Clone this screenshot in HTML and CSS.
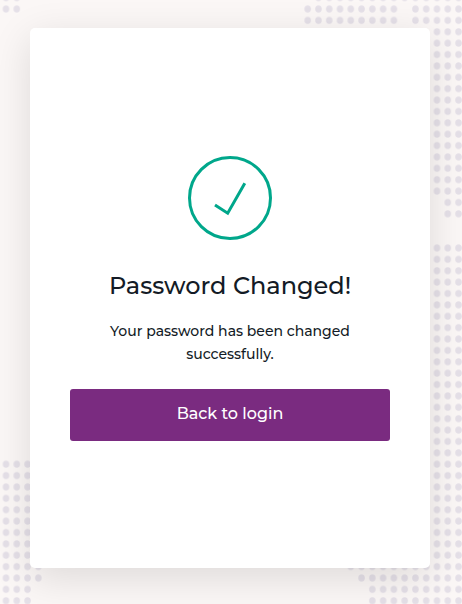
FILE: index.html
```html
<!DOCTYPE html>
<html lang="en">
<head>
    <meta charset="UTF-8">
    <meta name="viewport" content="width=device-width, initial-scale=1.0">
    <title>Password Changed</title>
    <link rel="stylesheet" href="styles.css">
</head>
<body>

    <!-- Dotted background, one unit = one dot cell -->
    <svg class="dots" width="462" height="604" aria-hidden="true">
        <defs>
            <pattern id="dot" width="1" height="1" patternUnits="userSpaceOnUse">
                <ellipse cx=".5" cy=".5" rx=".3" ry=".31" fill="#e5e0e8"/>
            </pattern>
        </defs>
        <g transform="translate(.61 3.31) scale(10.775 11.38)" fill="url(#dot)">
            <rect x="0" y="-1" width="2" height="2"/>
            <rect x="29" y="-1" width="14" height="1"/>
            <rect x="28" y="0" width="9" height="2"/>
            <rect x="38" y="0" width="5" height="2"/>
            <rect x="40" y="2" width="3" height="15"/>
            <rect x="41" y="17" width="2" height="2"/>
            <rect x="40" y="21" width="3" height="28"/>
            <rect x="32" y="49" width="11" height="1"/>
            <rect x="33" y="50" width="10" height="1"/>
            <rect x="34" y="51" width="9" height="2"/>
            <rect x="0" y="40" width="3" height="9"/>
            <rect x="0" y="49" width="4" height="2"/>
            <rect x="0" y="51" width="3" height="2"/>
        </g>
    </svg>

    <div class="container">
        <svg class="icon" width="84" height="84" viewBox="0 0 84 84" aria-hidden="true">
            <circle cx="42" cy="42" r="40.5"/>
            <path d="M27 48.9 L39.7 57.2 L56.8 27.2"/>
        </svg>
        <h1>Password Changed!</h1>
        <p>Your password has been changed successfully.</p>
        <button class="btn-login" type="button">Back to login</button>
    </div>

</body>
</html>
```

FILE: styles.css
```css
* {
    box-sizing: border-box;
}
body {
    font-family: Montserrat, Inter, "Open Sans", sans-serif;
    background-color: #fbf7f6;
    color: #131b26;
    margin: 0;
    padding: 28px 32px 36px 30px;
    height: 100vh;
    overflow: hidden;
}
.dots {
    position: absolute;
    top: 0;
    left: 0;
}
.container {
    position: relative;
    display: flex;
    flex-direction: column;
    align-items: center;
    justify-content: center;
    width: 400px;
    height: 540px;
    padding: 1px 40px 0;
    background: white;
    border-radius: 5px;
    box-shadow: 0 10px 40px rgba(0, 0, 0, 0.12);
    text-align: center;
}
.icon {
    display: block;
    fill: none;
    stroke: #00a78b;
    stroke-width: 3;
}
.container h1 {
    margin: 31px 0 19px;
    font-size: 24px;
    font-weight: 500;
    line-height: 30px;
    white-space: nowrap;
}
.container p {
    margin: 0 0 23px;
    padding: 0 30px;
    font-size: 14px;
    font-weight: 500;
    line-height: 23px;
}
.btn-login {
    width: 100%;
    height: 52px;
    padding: 0 0 3px;
    border: none;
    border-radius: 3px;
    background-color: #7a2b80;
    color: white;
    font-family: inherit;
    font-size: 16px;
    font-weight: 500;
    cursor: pointer;
}
.btn-login:hover {
    background-color: #642269;
}
```
